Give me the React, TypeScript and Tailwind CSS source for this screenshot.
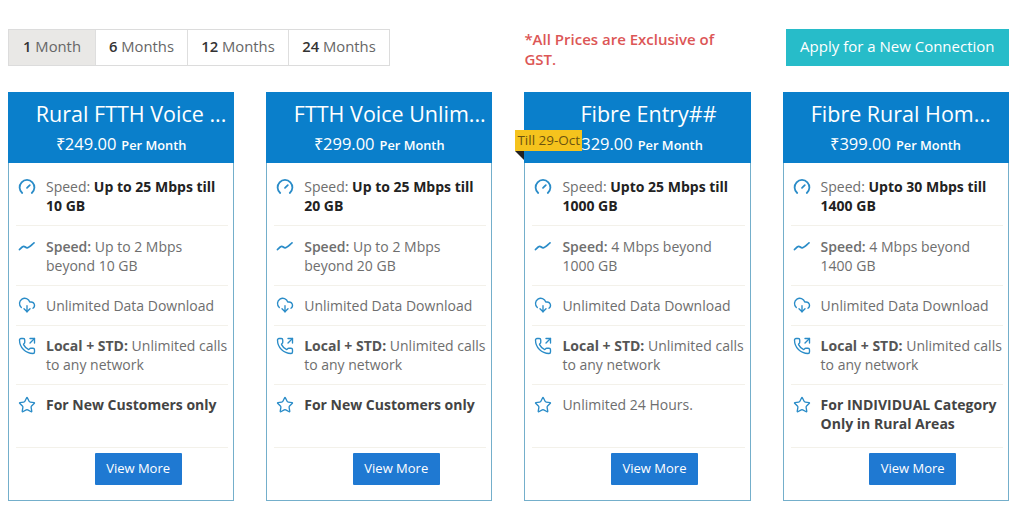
import { CloudDownload, PhoneOutgoing, Star } from "lucide-react";
import type { ReactNode } from "react";

function GaugeIcon() {
  return (
    <svg viewBox="0 0 18 18" className="h-[18px] w-[18px]" fill="none" stroke="#2a8cc8" strokeWidth="1.8" strokeLinecap="round">
      <path d="M4.2 15A7.4 7.4 0 1 1 13.8 15" />
      <path d="M9 9.8l2.8-2.6" />
    </svg>
  );
}

function LineIcon() {
  return (
    <svg viewBox="0 0 18 18" className="h-[18px] w-[18px]" fill="none" stroke="#2a8cc8" strokeWidth="1.8" strokeLinecap="round" strokeLinejoin="round">
      <path d="M1.5 12.5c1.5-1.6 3-3.2 4.2-3.2s2 1.6 3.4 1.6 3.4-2 6.9-5" />
    </svg>
  );
}

type Plan = {
  title: string;
  titlePad: string;
  price: string;
  speed: ReactNode;
  after: ReactNode;
  last: ReactNode;
  badge?: boolean;
};

const bold = "font-bold text-[#222]";

const plans: Plan[] = [
  {
    title: "Rural FTTH Voice ...",
    titlePad: "pr-[6px]",
    price: "249.00",
    speed: <b className={bold}>Up to 25 Mbps till 10 GB</b>,
    after: "Up to 2 Mbps beyond 10 GB",
    last: <b className="font-bold text-[#444]">For New Customers only</b>,
  },
  {
    title: "FTTH Voice Unlim...",
    titlePad: "pr-[5px]",
    price: "299.00",
    speed: <b className={bold}>Up to 25 Mbps till 20 GB</b>,
    after: "Up to 2 Mbps beyond 20 GB",
    last: <b className="font-bold text-[#444]">For New Customers only</b>,
  },
  {
    title: "Fibre Entry##",
    titlePad: "pr-[4px]",
    price: "329.00",
    speed: <b className={bold}>Upto 25 Mbps till 1000 GB</b>,
    after: "4 Mbps beyond 1000 GB",
    last: "Unlimited 24 Hours.",
    badge: true,
  },
  {
    title: "Fibre Rural Hom...",
    titlePad: "pr-[16px]",
    price: "399.00",
    speed: <b className={bold}>Upto 30 Mbps till 1400 GB</b>,
    after: "4 Mbps beyond 1400 GB",
    last: <b className="font-bold text-[#444]">For INDIVIDUAL Category Only in Rural Areas</b>,
  },
];

function Row({ icon, children, noLine }: { icon: ReactNode; children: ReactNode; noLine?: boolean }) {
  return (
    <div className={`flex gap-[9px] pb-[10px] pt-[10.25px] ${noLine ? "" : "border-b border-[#f3f1ea]"}`}>
      <span className="ml-[1px] flex h-[19px] w-[20px] shrink-0 items-center justify-center">{icon}</span>
      <p>{children}</p>
    </div>
  );
}

function PlanCard({ plan }: { plan: Plan }) {
  const iconClass = "h-[18px] w-[18px] text-[#2a8cc8]";
  return (
    <article className="relative flex h-[409px] flex-col border border-[#74afcb] bg-white">
      <header className="-mx-px -mt-px h-[71px] bg-[#0a7fcb] pt-[7px] text-white">
        <h2 className={`whitespace-nowrap pl-[26px] text-center text-[21.5px] leading-[30px] ${plan.titlePad}`}>{plan.title}</h2>
        <p className="mt-[3px] flex items-baseline justify-center gap-[5px] leading-[24px]">
          <span className="text-[16.5px]">₹{plan.price}</span>
          <span className="text-[12.8px] font-semibold">Per Month</span>
        </p>
      </header>
      {plan.badge && (
        <>
          <span className="absolute left-[-10px] top-[37px] z-10 h-[21px] w-[67px] whitespace-nowrap bg-[#f5c31d] px-[2px] text-[13.5px] leading-[21px] text-[#6b5310]">
            Till 29-Oct
          </span>
          <span className="absolute left-[-10px] top-[58px] border-l-[9px] border-t-[9px] border-l-transparent border-t-[#222]" />
        </>
      )}
      <div className="ml-[7px] mr-[5px] mt-[4px] flex-1 text-[14px] leading-[19px] text-[#6e6e6e]">
        <Row icon={<GaugeIcon />}>
          Speed: {plan.speed}
        </Row>
        <Row icon={<LineIcon />}>
          <span className="font-semibold">Speed:</span> {plan.after}
        </Row>
        <Row icon={<CloudDownload className={iconClass} strokeWidth={1.8} />}>Unlimited Data Download</Row>
        <Row icon={<PhoneOutgoing className={iconClass} strokeWidth={1.8} />}>
          <span className="font-bold text-[#555]">Local + STD:</span> Unlimited calls to any network
        </Row>
        <div className="h-[63px] border-b border-[#f3f1ea]">
          <Row noLine icon={<Star className={iconClass} strokeWidth={1.8} />}>
            {plan.last}
          </Row>
        </div>
      </div>
      <div className="flex justify-center pb-[15px] pl-[34px]">
        <button className="h-[32px] w-[87px] rounded-[1px] bg-[#1f79d2] text-[13px] text-white">View More</button>
      </div>
    </article>
  );
}

export default function App() {
  const tabs = [
    ["1", " Month", "w-[86px] bg-[#e9e8e6]"],
    ["6", " Months", "w-[92px] border-l border-[#dedede]"],
    ["12", " Months", "w-[101px] border-l border-[#dedede]"],
    ["24", " Months", "w-[101px] border-l border-[#dedede]"],
  ];
  return (
    <main className="h-[511px] overflow-hidden bg-white pl-[8px] pr-[15.2px] pt-[29px] font-['Open_Sans',sans-serif]">
      <section className="grid h-[37px] grid-cols-4 gap-x-[32px]">
        <div className="col-span-2 flex h-[37px] w-[382px] border border-[#dcdcdc] text-[14.8px] text-[#666]">
          {tabs.map(([n, label, cls]) => (
            <button key={n} className={`whitespace-pre pb-[2px] ${cls}`}>
              <span className="font-semibold text-[#333]">{n}</span>
              {label}
            </button>
          ))}
        </div>
        <p className="w-[205px] text-[15px] font-semibold leading-[20px] text-[#dc5656]">*All Prices are Exclusive of GST.</p>
        <div className="flex justify-end">
          <button className="h-[37px] w-[223px] bg-[#27bcc9] pb-[2px] text-[15px] text-white">Apply for a New Connection</button>
        </div>
      </section>
      <section className="mt-[26px] grid grid-cols-4 gap-x-[32px]">
        {plans.map((plan) => (
          <PlanCard key={plan.title} plan={plan} />
        ))}
      </section>
    </main>
  );
}
